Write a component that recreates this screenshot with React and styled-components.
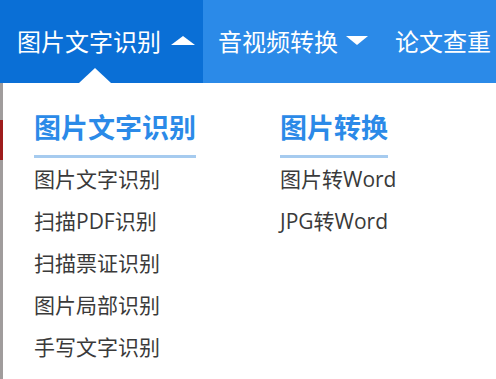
import React from 'react'
import styled, { createGlobalStyle } from 'styled-components'

const GlobalStyle = createGlobalStyle`
  html, body {
    margin: 0;
    padding: 0;
    background: #ffffff;
    font-family: "Open Sans", "Noto Sans CJK SC", sans-serif;
  }
`;

const Page = styled.div`
  width: 496px;
  height: 379px;
  overflow: hidden;
  display: flex;
  flex-direction: column;
`;

const NavBar = styled.div`
  height: 83px;
  flex-shrink: 0;
  display: flex;
  background: #2b8ae8;
  white-space: nowrap;
`;

const Tab = styled.div`
  position: relative;
  display: flex;
  align-items: center;
  padding: 0 ${p => p.$pr || 0}px 3px ${p => p.$pl || 15}px;
  width: ${p => (p.$w ? p.$w + 'px' : 'auto')};
  box-sizing: border-box;
  background: ${p => (p.$active ? '#0a6fd6' : 'transparent')};
  color: #ffffff;
  font-family: "Noto Sans CJK SC", sans-serif;
  font-size: 24px;
  flex-shrink: 0;
`;

const Caret = styled.span`
  display: inline-block;
  width: 0;
  height: 0;
  margin-left: ${p => (p.$up ? 10 : 8)}px;
  border-left: ${p => (p.$up ? 12 : 11)}px solid transparent;
  border-right: ${p => (p.$up ? 12 : 11)}px solid transparent;
  ${p => (p.$up ? 'border-bottom: 9px solid #ffffff;' : 'border-top: 9px solid #ffffff;')}
`;

const Notch = styled.span`
  position: absolute;
  left: 79px;
  bottom: 0;
  width: 0;
  height: 0;
  border-left: 16px solid transparent;
  border-right: 16px solid transparent;
  border-bottom: 15px solid #ffffff;
`;

const Body = styled.div`
  flex: 1;
  display: flex;
`;

const Strip = styled.div`
  width: 3px;
  display: flex;
  flex-direction: column;
  flex-shrink: 0;
`;

const StripPart = styled.div`
  height: ${p => (p.$h ? p.$h + 'px' : 'auto')};
  flex: ${p => (p.$h ? 'none' : 1)};
  background: ${p => p.$c};
`;

const Panel = styled.div`
  flex: 1;
  display: flex;
  padding: 28px 0 0 31px;
  background: #ffffff;
`;

const Column = styled.div`
  width: ${p => p.$w}px;
  display: flex;
  flex-direction: column;
  align-items: flex-start;
`;

const Heading = styled.div`
  font-family: "Noto Sans CJK SC", sans-serif;
  font-weight: 700;
  font-size: 27px;
  line-height: 32px;
  color: #2b8ae8;
  padding-bottom: 12px;
  border-bottom: 3px solid #a6cbef;
`;

const Item = styled.div`
  font-family: "Open Sans", "Noto Sans CJK SC", sans-serif;
  font-size: 21px;
  line-height: 42px;
  color: #3a3a3a;
`;

const groups = [
  {
    title: '图片文字识别',
    width: 246,
    items: ['图片文字识别', '扫描PDF识别', '扫描票证识别', '图片局部识别', '手写文字识别'],
  },
  {
    title: '图片转换',
    width: 200,
    items: ['图片转Word', 'JPG转Word'],
  },
];

const App = () => {
  return (
    <Page>
      <GlobalStyle />
      <NavBar>
        <Tab $active $pl={17} $w={203}>
          图片文字识别
          <Caret $up />
          <Notch />
        </Tab>
        <Tab $pl={15} $pr={13}>
          音视频转换
          <Caret />
        </Tab>
        <Tab $pl={14}>论文查重</Tab>
      </NavBar>
      <Body>
        <Strip>
          <StripPart $h={37} $c="#a09c9c" />
          <StripPart $h={40} $c="#9e1c1c" />
          <StripPart $c="#a09c9c" />
        </Strip>
        <Panel>
          {groups.map(g => (
            <Column key={g.title} $w={g.width}>
              <Heading>{g.title}</Heading>
              {g.items.map(it => (
                <Item key={it}>{it}</Item>
              ))}
            </Column>
          ))}
        </Panel>
      </Body>
    </Page>
  )
}

export default App
